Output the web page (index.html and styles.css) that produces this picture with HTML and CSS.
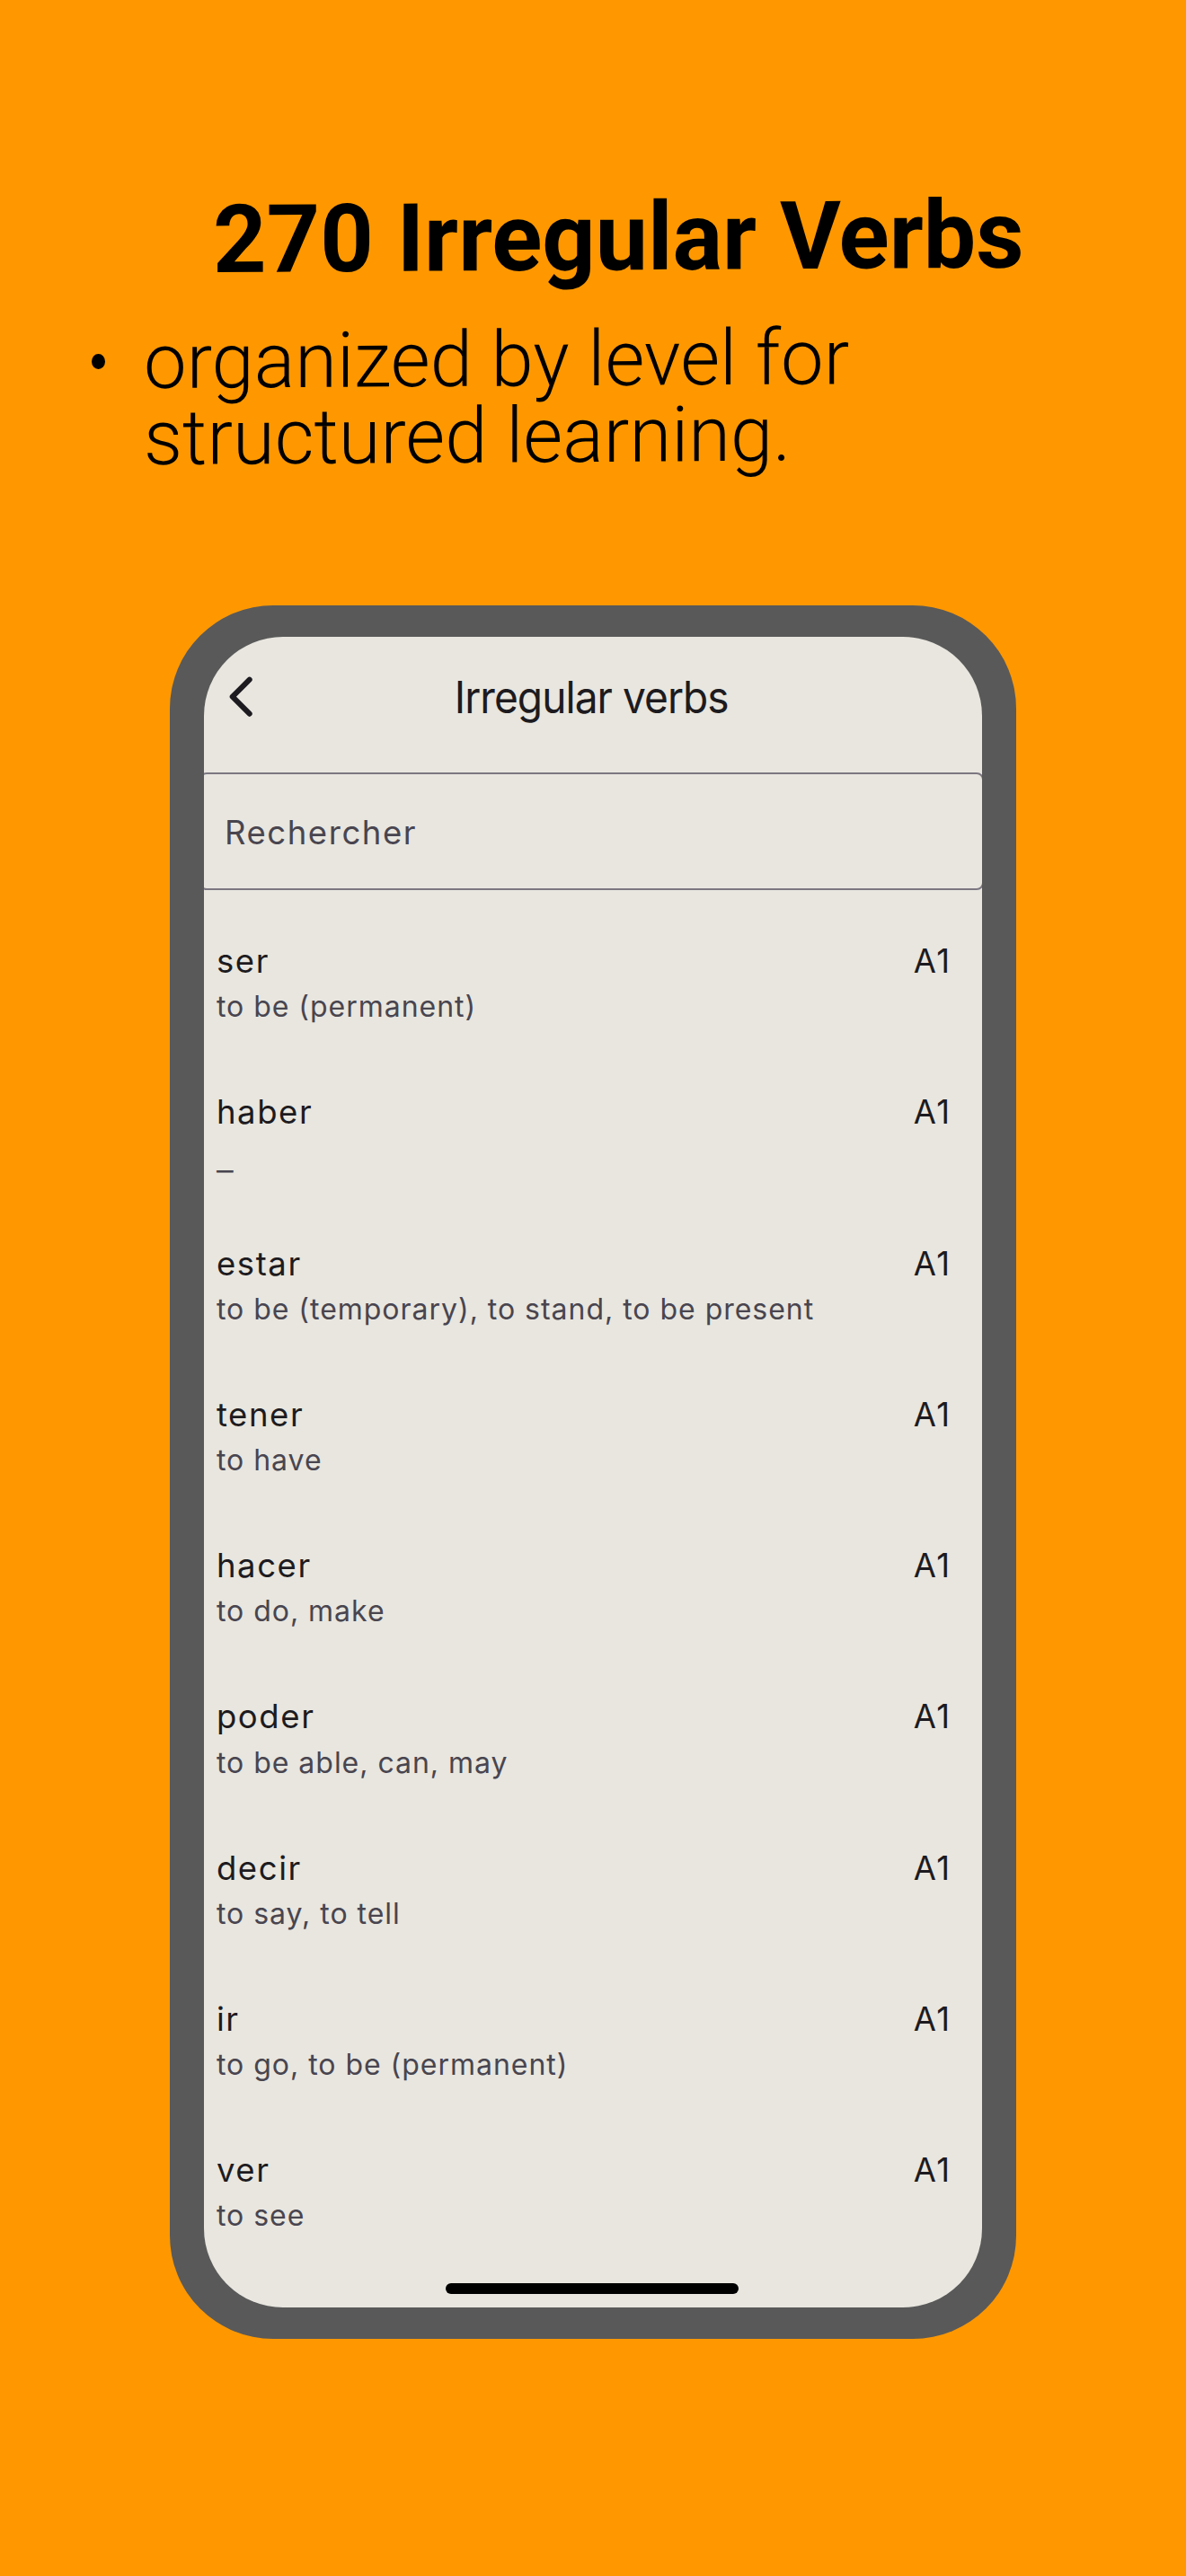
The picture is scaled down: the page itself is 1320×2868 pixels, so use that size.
FILE: index.html
```html
<!DOCTYPE html>
<html lang="en">
<head>
<meta charset="utf-8">
<title>270 Irregular Verbs</title>
<link rel="stylesheet" href="styles.css">
</head>
<body>
<header class="promo">
  <h1 class="promo-title">270 Irregular Verbs</h1>
  <div class="promo-item">
    <span class="promo-bullet"></span>
    <p class="promo-text">organized by level for<br>structured learning.</p>
  </div>
</header>
<main class="phone">
  <div class="screen">
    <div class="app-bar">
      <svg class="back" viewBox="0 0 28 46" aria-label="Back"><path d="M23.7 3.7 4.7 22.7 23.7 41.7"/></svg>
      <h2 class="app-title">Irregular verbs</h2>
    </div>
    <div class="search">Rechercher</div>
    <ul class="verbs">
      <li class="verb"><div><div class="name">ser</div><div class="meaning">to be (permanent)</div></div><span class="level">A1</span></li>
      <li class="verb"><div><div class="name">haber</div><div class="meaning"><span class="blank">_</span></div></div><span class="level">A1</span></li>
      <li class="verb"><div><div class="name">estar</div><div class="meaning">to be (temporary), to stand, to be present</div></div><span class="level">A1</span></li>
      <li class="verb"><div><div class="name">tener</div><div class="meaning">to have</div></div><span class="level">A1</span></li>
      <li class="verb"><div><div class="name">hacer</div><div class="meaning">to do, make</div></div><span class="level">A1</span></li>
      <li class="verb"><div><div class="name">poder</div><div class="meaning">to be able, can, may</div></div><span class="level">A1</span></li>
      <li class="verb"><div><div class="name">decir</div><div class="meaning">to say, to tell</div></div><span class="level">A1</span></li>
      <li class="verb"><div><div class="name">ir</div><div class="meaning">to go, to be (permanent)</div></div><span class="level">A1</span></li>
      <li class="verb"><div><div class="name">ver</div><div class="meaning">to see</div></div><span class="level">A1</span></li>
    </ul>
    <div class="home-bar"></div>
  </div>
</main>
</body>
</html>
```
FILE: styles.css
```css
* {
  box-sizing: border-box;
}

body {
  margin: 0;
  width: 1320px;
  height: 2868px;
  background: #ff9800;
  font-family: Inter, "Liberation Sans", sans-serif;
  overflow: hidden;
}

h1, h2, p, ul {
  margin: 0;
  padding: 0;
}

/* Promo copy: tilted upwards a little to the right */
.promo {
  height: 674px;
  padding-top: 214px;
  color: #000;
  font-family: Roboto, "Liberation Sans", sans-serif;
}

.promo-title {
  width: max-content;
  margin-left: 236.8px;
  font-size: 105.5px;
  font-weight: 700;
  line-height: 106px;
  transform: matrix(0.985, -0.0059, 0, 1, 0, 0);
  transform-origin: 0 0;
}

.promo-item {
  display: flex;
  margin-top: 41.3px;
  padding-left: 102px;
}

.promo-bullet {
  width: 15.3px;
  height: 17.3px;
  margin: 32.4px 42.4px 0 0;
  border-radius: 50%;
  background: #000;
}

.promo-text {
  width: max-content;
  font-size: 86px;
  font-weight: 300;
  line-height: 84.7px;
  white-space: nowrap;
  transform: matrix(0.988, -0.006, 0, 1, 0, 0);
  transform-origin: 0 0;
}

/* Phone */
.phone {
  width: 942px;
  height: 1929.5px;
  margin: 0 auto;
  padding: 35px 38px;
  border-radius: 115px;
  background: #595959;
}

.screen {
  position: relative;
  height: 100%;
  border-radius: 88px;
  background: #e8e6df;
  overflow: hidden;
}

.app-bar {
  display: grid;
  grid-template-columns: 90px 1fr 90px;
  height: 151px;
  padding-right: 4px;
}

.back {
  width: 28px;
  height: 46px;
  margin: 44px 0 0 27px;
  fill: none;
  stroke: #1d1b20;
  stroke-width: 6;
  stroke-linecap: round;
  stroke-linejoin: round;
}

.app-title {
  justify-self: center;
  margin-top: 38px;
  color: #1d1b20;
  font-size: 49px;
  font-weight: 400;
  line-height: 60px;
  letter-spacing: -1px;
  transform: scaleX(0.94);
}

.search {
  height: 131px;
  margin: 0 -1.7px 0 -5px;
  padding: 43px 0 0 26px;
  border: 2px solid #7c7781;
  border-radius: 8px;
  color: #49454f;
  font-size: 36.5px;
  line-height: 44px;
  letter-spacing: 1.55px;
}

.verbs {
  list-style: none;
}

.verb {
  display: flex;
  justify-content: space-between;
  height: 168.25px;
  padding: 57px 34.2px 0 13.9px;
}

.name,
.level {
  color: #1d1b20;
  font-size: 36.5px;
  line-height: 44px;
  letter-spacing: 1.6px;
}

.meaning {
  margin-top: 9.3px;
  color: #49454f;
  font-size: 32px;
  line-height: 40px;
  letter-spacing: 0.98px;
  white-space: nowrap;
}

.blank {
  display: inline-block;
  transform: translateY(1.5px) scaleX(1.28);
  transform-origin: 0 50%;
}

.home-bar {
  position: absolute;
  left: 269px;
  bottom: 14.2px;
  width: 325.5px;
  height: 12px;
  border-radius: 6px;
  background: #000;
}
```
